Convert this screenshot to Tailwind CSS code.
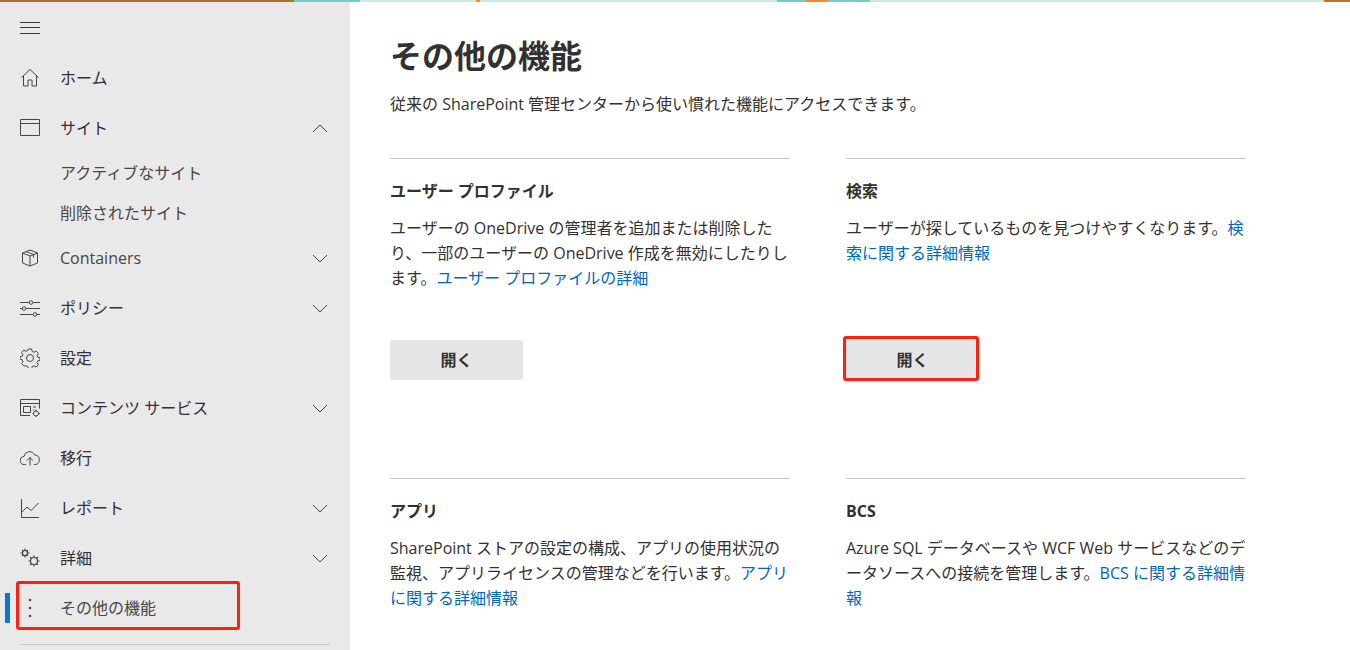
<!DOCTYPE html>
<html lang="ja">
<head>
    <meta charset="UTF-8">
    <meta name="viewport" content="width=device-width, initial-scale=1.0">
    <title>その他の機能</title>
    <script src="https://cdn.jsdelivr.net/npm/@tailwindcss/browser@4"></script>
</head>
<body class="h-[650px] w-[1350px] overflow-hidden bg-white text-[#323130] font-['Open_Sans','Noto_Sans_CJK_JP',sans-serif]">
    <!-- theme strip -->
    <div class="flex h-[2px] w-full bg-[#cde9dd]">
        <div class="w-[294px] bg-[#a5722c]"></div>
        <div class="w-[66px] bg-[#70cdc9]"></div>
        <div class="ml-[116px] w-[4px] bg-[#f58a2e]"></div>
        <div class="ml-[297px] w-[29px] bg-[#70cdc9]"></div>
        <div class="w-[22px] bg-[#f58a2e]"></div>
        <div class="w-[42px] bg-[#70cdc9]"></div>
        <div class="ml-auto w-[26px] bg-[#b5782c]"></div>
    </div>

    <div class="flex h-[648px]">
        <!-- sidebar -->
        <nav class="relative w-[350px] shrink-0 bg-[#e9e9e9] text-[16px]">
            <div class="flex h-[51px] items-center pl-[20px]">
                <svg width="20" height="12" viewBox="0 0 20 12" fill="none" stroke="#3b3a39"><path d="M0 .5h20M0 5.5h20M0 11.5h20"/></svg>
            </div>

            <a class="flex h-[50px] items-center pl-[20px]">
                <svg class="w-[20px]" width="20" height="20" viewBox="0 0 20 20" fill="none" stroke="#484644"><path d="M1.5 9.5 10 1.5l8.5 8M3.5 8v10h4.5v-6h4v6h4.500V8"/></svg>
                <span class="ml-[20px]">ホーム</span>
            </a>
            <a class="flex h-[50px] items-center pl-[20px]">
                <svg class="w-[20px]" width="20" height="18" viewBox="0 0 20 18" fill="none" stroke="#484644"><path d="M.5.500h19v16H.5zM.5 4.500h19"/></svg>
                <span class="ml-[20px]">サイト</span>
                <svg class="ml-auto mr-[22px]" width="16" height="9" viewBox="0 0 16 9" fill="none" stroke="#484644"><path d="M1 8 8 1l7 7"/></svg>
            </a>
            <a class="flex h-[40px] items-center pl-[60px] text-[#484644]">アクティブなサイト</a>
            <a class="flex h-[40px] items-center pl-[60px] text-[#484644]">削除されたサイト</a>
            <a class="flex h-[50px] items-center pl-[20px] text-[#484644]">
                <svg class="w-[20px]" width="18" height="18" viewBox="0 0 18 18" fill="none" stroke="#484644"><path d="M9 1 1.500 4v10L9 17l7.500-3V4zM1.500 4 9 7l7.500-3M9 7v10M5 2.500l7.500 3v3"/></svg>
                <span class="ml-[20px]">Containers</span>
                <svg class="ml-auto mr-[22px]" width="16" height="9" viewBox="0 0 16 9" fill="none" stroke="#484644"><path d="m1 1 7 7 7-7"/></svg>
            </a>
            <a class="flex h-[50px] items-center pl-[20px]">
                <svg class="w-[20px]" width="20" height="18" viewBox="0 0 20 18" fill="none" stroke="#484644"><path d="M0 3.500h9.500M13 3.500h7M0 9.500h2.500M6 9.500h14M0 15.500h13M16.500 15.500H20"/><circle cx="11" cy="3.500" r="1.800"/><circle cx="4" cy="9.500" r="1.800"/><circle cx="15" cy="15.500" r="1.800"/></svg>
                <span class="ml-[20px]">ポリシー</span>
                <svg class="ml-auto mr-[22px]" width="16" height="9" viewBox="0 0 16 9" fill="none" stroke="#484644"><path d="m1 1 7 7 7-7"/></svg>
            </a>
            <a class="flex h-[50px] items-center pl-[20px]">
                <svg class="w-[20px]" width="20" height="20" viewBox="0 0 20 20" fill="none" stroke="#484644"><circle cx="10" cy="10" r="3.500"/><path d="M8.300 1h3.400l.5 2.500 1.700.8 2.200-1.300 2.300 2.400-1.300 2.100.7 1.700 2.200.5v2.600l-2.200.6-.7 1.700 1.300 2.100-2.300 2.400-2.200-1.300-1.700.7-.5 2.200H8.300l-.5-2.200-1.700-.7L3.900 18 1.600 15.600l1.300-2.100-.7-1.700L0 11.300V8.700l2.200-.5.700-1.700-1.300-2.100L3.900 2l2.200 1.300 1.700-.8z"/></svg>
                <span class="ml-[20px]">設定</span>
            </a>
            <a class="flex h-[50px] items-center pl-[20px]">
                <svg class="w-[20px]" width="20" height="18" viewBox="0 0 20 18" fill="none" stroke="#484644"><path d="M10 16.500H.5V.500h19v9M.5 4.500h19M3.500 7.500h7v6h-7zM13 8h3M13 11h1"/><circle cx="16" cy="14.500" r="2.500"/><path d="M16 10.500v1.500M16 17v1.500M12.500 14.500H13.500M18.500 14.500H20"/></svg>
                <span class="ml-[20px]">コンテンツ サービス</span>
                <svg class="ml-auto mr-[22px]" width="16" height="9" viewBox="0 0 16 9" fill="none" stroke="#484644"><path d="m1 1 7 7 7-7"/></svg>
            </a>
            <a class="flex h-[50px] items-center pl-[20px]">
                <svg class="w-[20px]" width="20" height="16" viewBox="0 0 20 16" fill="none" stroke="#484644"><path d="M6 14.500H4.500a4 4 0 0 1-.5-8 5.500 5.500 0 0 1 10.500-1.500 4.800 4.800 0 0 1 1 9.500H14M10 15.500v-8M7 10.500l3-3 3 3"/></svg>
                <span class="ml-[20px]">移行</span>
            </a>
            <a class="flex h-[50px] items-center pl-[20px]">
                <svg class="w-[20px]" width="20" height="19" viewBox="0 0 20 19" fill="none" stroke="#484644"><path d="M1.500 0v18.500H19M2 13l5-5 4 3.500L18.500 4"/></svg>
                <span class="ml-[20px]">レポート</span>
                <svg class="ml-auto mr-[22px]" width="16" height="9" viewBox="0 0 16 9" fill="none" stroke="#484644"><path d="m1 1 7 7 7-7"/></svg>
            </a>
            <a class="flex h-[50px] items-center pl-[20px]">
                <svg class="w-[20px]" width="20" height="20" viewBox="0 0 20 20" fill="none" stroke="#484644" stroke-width="1.200"><circle cx="5" cy="5" r="2.500"/><path d="M5 .500v2M5 7.500v2M.500 5h2M7.500 5h2M2 2l1.500 1.500M6.500 6.500 8 8M8 2 6.500 3.500M3.500 6.500 2 8"/><circle cx="14" cy="13" r="3.500"/><path d="M14 7.500v2M14 16.500v2M8.500 13h2M17.500 13h2M10 9l1.500 1.500M16.500 15.500 18 17M18 9l-1.500 1.500M11.500 15.500 10 17"/></svg>
                <span class="ml-[20px]">詳細</span>
                <svg class="ml-auto mr-[22px]" width="16" height="9" viewBox="0 0 16 9" fill="none" stroke="#484644"><path d="m1 1 7 7 7-7"/></svg>
            </a>
            <a class="relative flex h-[50px] items-center pl-[20px] text-[#484644]">
                <span class="absolute left-[5px] top-[10px] h-[30px] w-[5px] bg-[#0078d4]"></span>
                <svg class="w-[20px]" width="20" height="20" viewBox="0 0 20 20" fill="#484644"><circle cx="10" cy="2" r="1.300"/><circle cx="10" cy="10" r="1.300"/><circle cx="10" cy="18" r="1.300"/></svg>
                <span class="ml-[20px]">その他の機能</span>
            </a>
            <div class="mx-[20px] mt-[11px] border-t border-[#c8c8c8]"></div>

            <!-- annotation -->
            <div class="absolute left-[16px] top-[579px] h-[49px] w-[224px] rounded-[3px] border-[3px] border-[#ff2010]"></div>
        </nav>

        <!-- main -->
        <main class="relative flex-1 pl-[40px]">
            <h1 class="mt-[30px] text-[32px] leading-[48px] font-bold text-[#323130]">その他の機能</h1>
            <p class="mt-[12px] text-[16px] leading-[24px]">従来の SharePoint 管理センターから使い慣れた機能にアクセスできます。</p>

            <div class="mt-[42px] grid w-[856px] grid-cols-[400px_400px] gap-x-[56px]">
                <section class="h-[320px] border-t border-[#c8c6c4]">
                    <h2 class="mt-[20px] text-[16px] leading-[24px] font-bold">ユーザー プロファイル</h2>
                    <p class="mt-[13px] text-[16px] leading-[25px]">ユーザーの OneDrive の管理者を追加または削除したり、一部のユーザーの OneDrive 作成を無効にしたりします。<a class="text-[#0067b8]">ユーザー プロファイルの詳細</a></p>
                    <button class="mt-[49px] h-[40px] w-[133px] rounded-[2px] bg-[#e6e6e6] text-[16px] font-bold">開く</button>
                </section>
                <section class="h-[320px] border-t border-[#c8c6c4]">
                    <h2 class="mt-[20px] text-[16px] leading-[24px] font-bold">検索</h2>
                    <p class="mt-[13px] text-[16px] leading-[25px]">ユーザーが探しているものを見つけやすくなります。<a class="text-[#0067b8]">検索に関する詳細情報</a></p>
                    <button class="mt-[74px] h-[40px] w-[133px] rounded-[2px] bg-[#e6e6e6] text-[16px] font-bold">開く</button>
                </section>
                <section class="border-t border-[#c8c6c4]">
                    <h2 class="mt-[20px] text-[16px] leading-[24px] font-bold">アプリ</h2>
                    <p class="mt-[13px] text-[16px] leading-[25px]">SharePoint ストアの設定の構成、アプリの使用状況の監視、アプリライセンスの管理などを行います。<a class="text-[#0067b8]">アプリに関する詳細情報</a></p>
                </section>
                <section class="border-t border-[#c8c6c4]">
                    <h2 class="mt-[20px] text-[16px] leading-[24px] font-bold">BCS</h2>
                    <p class="mt-[13px] text-[16px] leading-[25px]">Azure SQL データベースや WCF Web サービスなどのデータソースへの接続を管理します。<a class="text-[#0067b8]">BCS に関する詳細情報</a></p>
                </section>
            </div>

            <!-- annotation -->
            <div class="absolute left-[493px] top-[334px] h-[45px] w-[136px] rounded-[3px] border-[3px] border-[#ff2010]"></div>
        </main>
    </div>
</body>
</html>
